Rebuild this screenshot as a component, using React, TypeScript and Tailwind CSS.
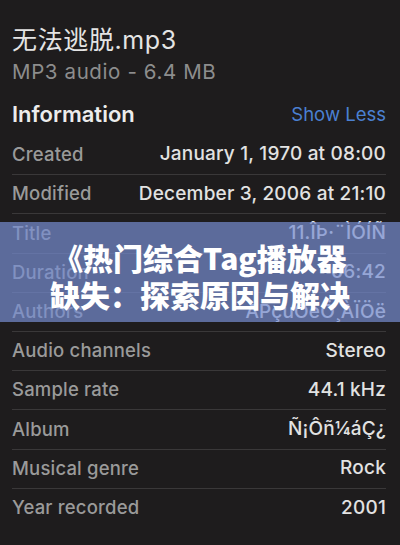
const rows: [string, string][] = [
  ["Created", "January 1, 1970 at 08:00"],
  ["Modified", "December 3, 2006 at 21:10"],
  ["Title", "11.ÎÞ·¨ÌÓÍÑ"],
  ["Duration", "06:42"],
  ["Authors", "APçuÖeÖ¸ÀÏÖë"],
  ["Audio channels", "Stereo"],
  ["Sample rate", "44.1 kHz"],
  ["Album", "Ñ¡Ôñ¼áÇ¿"],
  ["Musical genre", "Rock"],
  ["Year recorded", "2001"],
];

export default function App() {
  return (
    <div
      className="relative h-[545px] w-[400px] overflow-hidden bg-[#1e1c1d] pl-3 pr-[14px] pt-[25px]"
      style={{ fontFamily: "Inter, 'Noto Sans CJK SC', sans-serif" }}
    >
      {/* file header */}
      <div className="text-[25px] leading-[30px] tracking-[0.025em] text-[#e4e4e4]">无法逃脱.mp3</div>
      <div className="mt-[5px] text-[20.5px] leading-[24px] tracking-[0.03em] text-[#8d8d8d]">MP3 audio - 6.4 MB</div>

      <div className="mt-[16px] flex items-center justify-between">
        <span className="text-[22px] font-semibold leading-[28px] text-[#ececec]">Information</span>
        <span className="text-[18.5px] leading-[28px] text-[#4b80d2]">Show Less</span>
      </div>

      <div className="mt-[7px]">
        {rows.map(([label, value], i) => (
          <div
            key={label}
            className={`flex h-[39.2px] items-center justify-between font-medium ${
              i > 0 ? "border-t border-[#3a3839]" : ""
            }`}
          >
            <span className="text-[18.5px] tracking-[0.01em] text-[#9a9a9a]">{label}</span>
            <span className="text-[19px] tracking-[0.01em] text-[#e2e2e2]">{value}</span>
          </div>
        ))}
      </div>

      {/* headline banner over the rows */}
      <div
        className="absolute left-0 top-[222px] h-[100px] w-full bg-[#768dd2]/70 pt-[17px] text-center text-[30px] font-black leading-[37px] text-white"
        style={{ fontFamily: "'Noto Sans CJK SC', sans-serif" }}
      >
        <div>《热门综合Tag播放器</div>
        <div>缺失：探索原因与解决</div>
      </div>
    </div>
  );
}
